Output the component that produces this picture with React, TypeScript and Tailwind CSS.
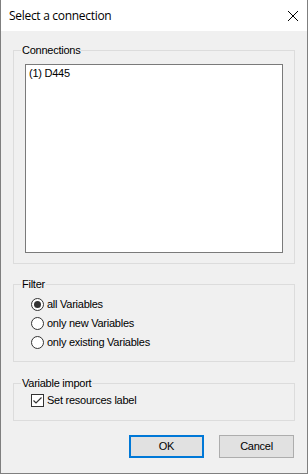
import React from "react";

function GroupBox({ label, className, children }: { label: string; className: string; children?: React.ReactNode }) {
  return (
    <div className={"relative border border-[#dcdcdc] " + className}>
      <span className="absolute left-[7px] -top-[7px] bg-[#f0f0f0] px-[1px] leading-[13px] text-black">{label}</span>
      {children}
    </div>
  );
}

function Radio({ checked, label }: { checked?: boolean; label: string }) {
  return (
    <div className="flex items-center h-[17px] pl-[17px]">
      <svg width="13" height="13" viewBox="0 0 13 13" className="shrink-0">
        <circle cx="6.5" cy="6.5" r="6" fill="#ffffff" stroke="#333333" strokeWidth="1" />
        {checked && <circle cx="6.5" cy="6.5" r="3.5" fill="#333333" />}
      </svg>
      <span className="ml-[3px] leading-[13px] text-black">{label}</span>
    </div>
  );
}

export default function App() {
  return (
    <div className="w-[308px] h-[474px] flex flex-col border-x border-b border-[#7f7f7f] bg-[#f0f0f0] font-['Liberation_Sans',Arial,sans-serif] text-[11px] tracking-[-0.25px] text-black">
      <div className="h-[31px] shrink-0 bg-white flex items-center justify-between pl-[8px] pr-[9px]">
        <span className="font-['Open_Sans','Noto_Sans',sans-serif] text-[12px] tracking-[-0.3px] text-black">Select a connection</span>
        <svg width="10" height="10" viewBox="0 0 10 10">
          <path d="M0 0 L10 10 M10 0 L0 10" stroke="#000000" strokeWidth="1" />
        </svg>
      </div>
      <div className="flex-1 flex flex-col px-[12px] pt-[19px]">
        <GroupBox label="Connections" className="h-[214px] pt-[13px] px-[11px]">
          <div className="h-[189px] bg-white border border-[#7a7a7a] pl-[3px] pt-[2px] leading-[13px]">(1) D445</div>
        </GroupBox>
        <GroupBox label="Filter" className="mt-[20px] h-[78px] pt-[11px] flex flex-col gap-[2px]">
          <Radio checked label="all Variables" />
          <Radio label="only new Variables" />
          <Radio label="only existing Variables" />
        </GroupBox>
        <GroupBox label="Variable import" className="mt-[21px] h-[38px] pt-[10px]">
          <div className="flex items-center h-[13px] pl-[17px]">
            <svg width="13" height="13" viewBox="0 0 13 13" className="shrink-0">
              <rect x="0.5" y="0.5" width="12" height="12" fill="#ffffff" stroke="#333333" strokeWidth="1" />
              <path d="M2.5 6.5 L5 9 L10.5 3.5" fill="none" stroke="#333333" strokeWidth="1.2" />
            </svg>
            <span className="ml-[3px] leading-[13px]">Set resources label</span>
          </div>
        </GroupBox>
        <div className="mt-[14px] flex justify-end gap-[15px] pr-[1px]">
          <button className="w-[75px] h-[23px] bg-[#e1e1e1] border-2 border-[#0078d7] text-black leading-[13px]">OK</button>
          <button className="w-[75px] h-[23px] bg-[#e1e1e1] border border-[#adadad] text-black leading-[13px]">Cancel</button>
        </div>
      </div>
    </div>
  );
}
